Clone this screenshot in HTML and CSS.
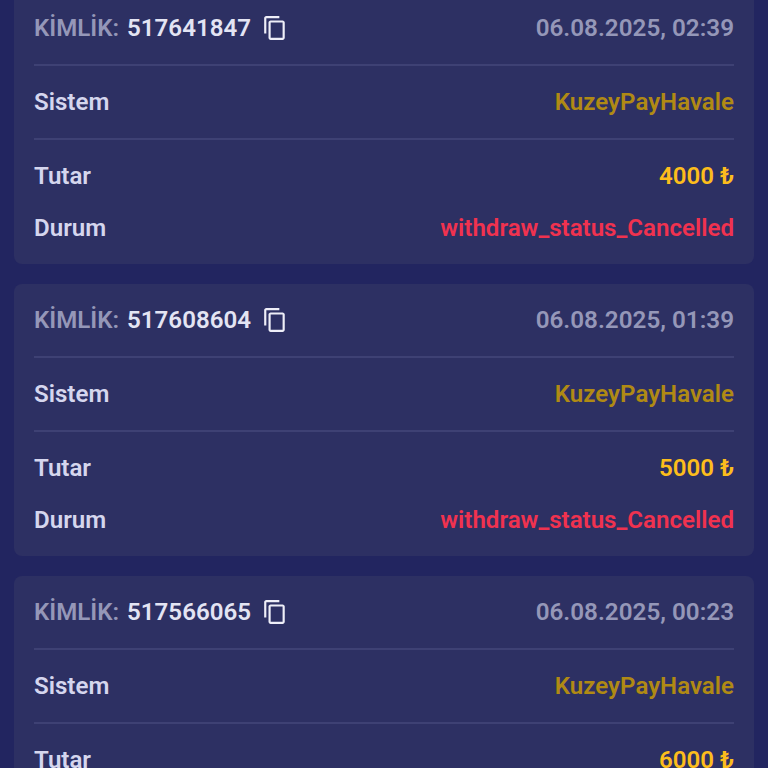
FILE: index.html
```html
<!DOCTYPE html>
<html lang="tr">
<head>
<meta charset="utf-8">
<title>Para çekme geçmişi</title>
<link rel="stylesheet" href="styles.css">
</head>
<body>
<main class="list">
  <section class="card">
    <div class="row head">
      <div class="id"><span class="id-label">KİMLİK:</span><span class="id-value">517641847</span>
        <svg class="copy" viewBox="0 0 24 24" width="26" height="26"><path d="M16 1H4c-1.1 0-2 .9-2 2v14h2V3h12V1zm3 4H8c-1.1 0-2 .9-2 2v14c0 1.1.9 2 2 2h11c1.1 0 2-.9 2-2V7c0-1.1-.9-2-2-2zm0 16H8V7h11v14z"/></svg>
      </div>
      <span class="date">06.08.2025, 02:39</span>
    </div>
    <div class="row sys"><span class="label">Sistem</span><span class="system">KuzeyPayHavale</span></div>
    <div class="rows">
      <div class="row"><span class="label">Tutar</span><span class="amount">4000 ₺</span></div>
      <div class="row"><span class="label">Durum</span><span class="status">withdraw_status_Cancelled</span></div>
    </div>
  </section>
  <section class="card">
    <div class="row head">
      <div class="id"><span class="id-label">KİMLİK:</span><span class="id-value">517608604</span>
        <svg class="copy" viewBox="0 0 24 24" width="26" height="26"><path d="M16 1H4c-1.1 0-2 .9-2 2v14h2V3h12V1zm3 4H8c-1.1 0-2 .9-2 2v14c0 1.1.9 2 2 2h11c1.1 0 2-.9 2-2V7c0-1.1-.9-2-2-2zm0 16H8V7h11v14z"/></svg>
      </div>
      <span class="date">06.08.2025, 01:39</span>
    </div>
    <div class="row sys"><span class="label">Sistem</span><span class="system">KuzeyPayHavale</span></div>
    <div class="rows">
      <div class="row"><span class="label">Tutar</span><span class="amount">5000 ₺</span></div>
      <div class="row"><span class="label">Durum</span><span class="status">withdraw_status_Cancelled</span></div>
    </div>
  </section>
  <section class="card">
    <div class="row head">
      <div class="id"><span class="id-label">KİMLİK:</span><span class="id-value">517566065</span>
        <svg class="copy" viewBox="0 0 24 24" width="26" height="26"><path d="M16 1H4c-1.1 0-2 .9-2 2v14h2V3h12V1zm3 4H8c-1.1 0-2 .9-2 2v14c0 1.1.9 2 2 2h11c1.1 0 2-.9 2-2V7c0-1.1-.9-2-2-2zm0 16H8V7h11v14z"/></svg>
      </div>
      <span class="date">06.08.2025, 00:23</span>
    </div>
    <div class="row sys"><span class="label">Sistem</span><span class="system">KuzeyPayHavale</span></div>
    <div class="rows">
      <div class="row"><span class="label">Tutar</span><span class="amount">6000 ₺</span></div>
      <div class="row"><span class="label">Durum</span><span class="status">withdraw_status_Cancelled</span></div>
    </div>
  </section>
</main>
</body>
</html>
```
FILE: styles.css
```css
html, body {
  margin: 0;
  height: 768px;
  overflow: hidden;
  background: #222560;
  font-family: Roboto, "Noto Sans", sans-serif;
  font-weight: 600;
  font-size: 24.1px;
  line-height: 32px;
}
.list {
  display: flex;
  flex-direction: column;
  gap: 20px;
  margin-top: -8px;
  padding: 0 14px;
}
.card {
  flex: none;
  box-sizing: border-box;
  height: 272px;
  padding: 0 20px;
  border-radius: 8px;
  background: #2d3063;
}
.row {
  display: flex;
  justify-content: space-between;
  align-items: center;
  height: 32px;
}
.head {
  box-sizing: content-box;
  padding: 20px 0;
  border-bottom: 2px solid #3e4174;
}
.sys {
  box-sizing: content-box;
  padding: 20px 0;
  border-bottom: 2px solid #3e4174;
}
.rows {
  display: flex;
  flex-direction: column;
  gap: 20px;
  padding-top: 20px;
}
.id {
  display: flex;
  align-items: center;
}
.id-label { color: #9597b8; margin-right: 8px; }
.id-value { color: #e3e4f3; }
.copy { margin-left: 11px; fill: #eeeef8; }
.date { color: #9597b8; font-size: 24.25px; }
.label { color: #d5d6ee; }
.system { color: #b08a14; }
.amount { color: #fcbd1c; }
.status { color: #f0324f; }
```
